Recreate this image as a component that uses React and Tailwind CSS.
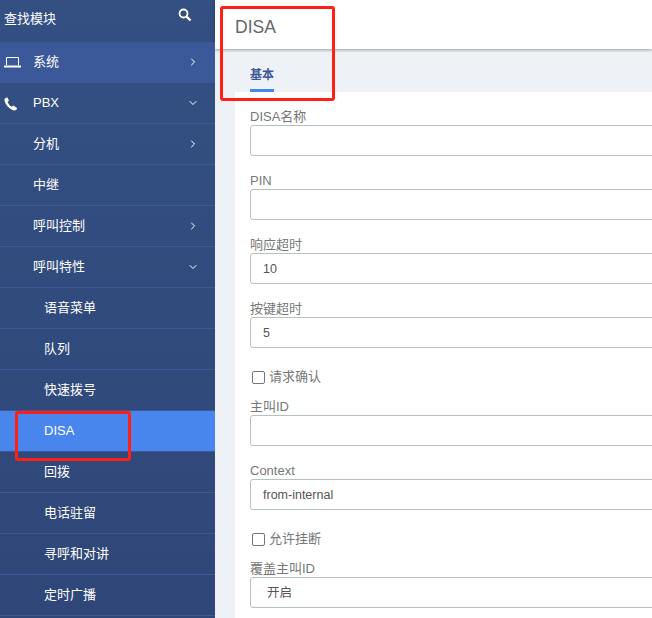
import React from "react";
import { ChevronRight, ChevronDown } from "lucide-react";

const font = "font-['Liberation_Sans','Noto_Sans_CJK_SC',sans-serif]";

const SearchIcon = () => (
  <svg width="14" height="14" viewBox="0 0 14 14" fill="none" stroke="white">
    <circle cx="5.5" cy="5.5" r="4" strokeWidth="1.8" />
    <path d="M8.5 8.5L12.5 12.5" strokeWidth="2.4" />
  </svg>
);

const LaptopIcon = () => (
  <svg width="17" height="12" viewBox="0 0 17 12" fill="none" stroke="white">
    <path d="M2.5 9V1.5H14.5V9" strokeWidth="1" />
    <path d="M0 10.5H17" strokeWidth="2" />
  </svg>
);

const PhoneIcon = () => (
  <svg width="14" height="14" viewBox="0 0 14 14" fill="white">
    <path d="M1 1.5L3.2 0.3L5 3.6L3.6 4.8C4.2 6.8 6 9 7.8 9.8L9.2 8.6L13 11L12.6 12.4C11.8 13.6 10 13.8 8.4 13C4.6 11.2 1.6 7.6 0.6 4C0.3 3 0.5 2.2 1 1.5Z" />
  </svg>
);

const menu = [
  { label: "系统", icon: <LaptopIcon />, arrow: "right", bg: "bg-[#3b5998]", pad: "pl-[33px]" },
  { label: "PBX", icon: <PhoneIcon />, arrow: "down", pad: "pl-[33px]" },
  { label: "分机", arrow: "right", pad: "pl-[33px]" },
  { label: "中继", pad: "pl-[33px]" },
  { label: "呼叫控制", arrow: "right", pad: "pl-[33px]" },
  { label: "呼叫特性", arrow: "down", pad: "pl-[33px]" },
  { label: "语音菜单", pad: "pl-[44px]" },
  { label: "队列", pad: "pl-[44px]" },
  { label: "快速拨号", pad: "pl-[44px]" },
  { label: "DISA", pad: "pl-[44px]", bg: "bg-[#4885ed]" },
  { label: "回拨", pad: "pl-[44px]" },
  { label: "电话驻留", pad: "pl-[44px]" },
  { label: "寻呼和对讲", pad: "pl-[44px]" },
  { label: "定时广播", pad: "pl-[44px]" },
];

const Sidebar = () => (
  <aside className="w-[215px] shrink-0 bg-gradient-to-b from-[#345083] to-[#2f4678] text-white text-[13px]">
    <div className="h-[42px] flex justify-between pl-1 pr-[23px]">
      <span className="mt-[10px] leading-[18px]">查找模块</span>
      <span className="mt-[8px]">
        <SearchIcon />
      </span>
    </div>
    {menu.map((item) => (
      <div
        key={item.label}
        className={`relative h-[41px] flex items-center justify-between pr-[16px] border-b border-[#3b5998] ${item.pad} ${item.bg || ""}`}
      >
        {item.icon && <span className="absolute left-[4px] top-[14px]">{item.icon}</span>}
        <span>{item.label}</span>
        {item.arrow === "right" && <ChevronRight size={12} strokeWidth={2} />}
        {item.arrow === "down" && <ChevronDown size={12} strokeWidth={2} />}
      </div>
    ))}
  </aside>
);

const Field = ({ label, value }) => (
  <div className="h-[64px]">
    <div className="h-[18px] pt-px leading-[18px] text-[13px] text-[#777]">{label}</div>
    <div className="w-[430px] h-[31px] flex items-center pl-[12px] pt-[2px] border border-[#b4c2bf] rounded-[3px] bg-white text-[12.5px] text-[#555]">
      {value}
    </div>
  </div>
);

const Check = ({ label }) => (
  <div className="h-[34px] pt-[4px]">
    <label className="h-[20px] flex items-center gap-[4px] pl-[2px] text-[13px] text-[#777]">
      <span className="w-[13px] h-[13px] border border-[#767676] rounded-[2px] bg-white" />
      {label}
    </label>
  </div>
);

export default function App() {
  return (
    <div className={`relative w-[652px] h-[618px] flex overflow-hidden bg-[#eef1f5] ${font}`}>
      <Sidebar />
      <main className="flex-1 min-w-0">
        <header className="h-[49px] bg-white flex items-center pl-[20px] pt-[5px] shadow-[0_1px_3px_rgba(0,0,0,0.35)] text-[17.5px] text-[#666]">
          DISA
        </header>
        <div className="h-[43px] pl-[35px]">
          <div className="w-[24px] h-[43px] pt-[18px] border-b-[3px] border-[#4885ed] text-[12px] font-bold text-[#3b5998] leading-[17px]">
            基本
          </div>
        </div>
        <section className="ml-[20px] bg-white pl-[15px] pt-[15px] h-[526px]">
          <Field label="DISA名称" />
          <Field label="PIN" />
          <Field label="响应超时" value="10" />
          <Field label="按键超时" value="5" />
          <Check label="请求确认" />
          <Field label="主叫ID" />
          <Field label="Context" value="from-internal" />
          <Check label="允许挂断" />
          <Field label="覆盖主叫ID" value={<span className="pl-[4px]">开启</span>} />
        </section>
      </main>
      {/* red annotation boxes */}
      <div className="absolute left-[220px] top-[6px] w-[115px] h-[95px] border-[3px] border-[#ff2015] rounded-[3px]" />
      <div className="absolute left-[15px] top-[411px] w-[116px] h-[50px] border-[3px] border-[#ff2015] rounded-[3px]" />
    </div>
  );
}
